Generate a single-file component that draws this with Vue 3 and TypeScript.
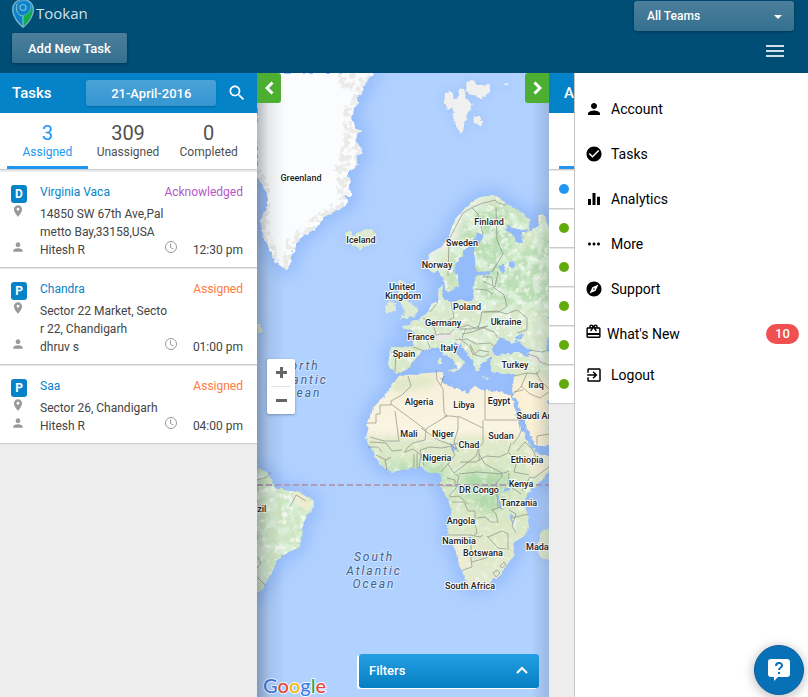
<script setup lang="ts">
import { ref } from 'vue'

interface Task {
  kind: string
  customer: string
  status: string
  tone: string
  address: string
  agent: string
  time: string
}
interface MenuItem {
  label: string
  icon: string
  kind?: string
  count?: number
}
interface Place {
  x: number
  y: number
  name: string
}

const team = ref('All Teams')
const activeTab = ref('Assigned')

const tabs = [
  { label: 'Assigned', count: 3 },
  { label: 'Unassigned', count: 309 },
  { label: 'Completed', count: 0 },
]

const tasks: Task[] = [
  { kind: 'D', customer: 'Virginia Vaca', status: 'Acknowledged', tone: 'violet', address: '14850 SW 67th Ave,Palmetto Bay,33158,USA', agent: 'Hitesh R', time: '12:30 pm' },
  { kind: 'P', customer: 'Chandra', status: 'Assigned', tone: 'orange', address: 'Sector 22 Market, Sector 22, Chandigarh', agent: 'dhruv s', time: '01:00 pm' },
  { kind: 'P', customer: 'Saa', status: 'Assigned', tone: 'orange', address: 'Sector 26, Chandigarh', agent: 'Hitesh R', time: '04:00 pm' },
]

const agents = ['busy', 'free', 'free', 'free', 'free', 'free']

const person = 'M12 12c2.21 0 4-1.79 4-4s-1.79-4-4-4-4 1.79-4 4 1.79 4 4 4zm0 2c-2.67 0-8 1.34-8 4v2h16v-2c0-2.66-5.33-4-8-4z'
const pin = 'M12 2C8.13 2 5 5.13 5 9c0 5.25 7 13 7 13s7-7.75 7-13c0-3.87-3.13-7-7-7zm0 9.5c-1.38 0-2.5-1.12-2.5-2.5s1.12-2.5 2.5-2.5 2.5 1.12 2.5 2.5-1.12 2.5-2.5 2.5z'

const menu: MenuItem[] = [
  { label: 'Account', icon: person },
  { label: 'Tasks', icon: 'M12 2C6.48 2 2 6.48 2 12s4.48 10 10 10 10-4.48 10-10S17.52 2 12 2zm-2 15l-5-5 1.41-1.41L10 14.17l7.59-7.59L19 8l-9 9z' },
  { label: 'Analytics', icon: 'M10 20h4V4h-4v16zm-6 0h4v-8H4v8zM16 9v11h4V9h-4z' },
  { label: 'More', icon: 'M6 10c-1.1 0-2 .9-2 2s.9 2 2 2 2-.9 2-2-.9-2-2-2zm12 0c-1.1 0-2 .9-2 2s.9 2 2 2 2-.9 2-2-.9-2-2-2zm-6 0c-1.1 0-2 .9-2 2s.9 2 2 2 2-.9 2-2-.9-2-2-2z' },
  { label: 'Support', icon: 'M12 10.9c-.61 0-1.1.49-1.1 1.1s.49 1.1 1.1 1.1c.61 0 1.1-.49 1.1-1.1s-.49-1.1-1.1-1.1zM12 2C6.48 2 2 6.48 2 12s4.48 10 10 10 10-4.48 10-10S17.52 2 12 2zm2.19 12.19L6 18l3.81-8.19L18 6l-3.81 8.19z' },
  { label: "What's New", kind: 'news', count: 10, icon: 'M20 6h-2.18c.11-.31.18-.65.18-1 0-1.66-1.34-3-3-3-1.05 0-1.96.54-2.5 1.35l-.5.67-.5-.68C10.96 2.54 10.05 2 9 2 7.34 2 6 3.34 6 5c0 .35.07.69.18 1H4c-1.11 0-1.99.89-1.99 2L2 19c0 1.11.89 2 2 2h16c1.11 0 2-.89 2-2V8c0-1.11-.89-2-2-2zm-5-2c.55 0 1 .45 1 1s-.45 1-1 1-1-.45-1-1 .45-1 1-1zM9 4c.55 0 1 .45 1 1s-.45 1-1 1-1-.45-1-1 .45-1 1-1zm11 15H4v-2h16v2zm0-5H4V8h5.08L7 10.83 8.62 12 11 8.76l1-1.36 1 1.36L15.38 12 17 10.83 14.92 8H20v6z' },
  { label: 'Logout', kind: 'last', icon: 'M10.09 15.59L11.5 17l5-5-5-5-1.41 1.41L12.67 11H3v2h9.67l-2.58 2.59zM19 3H5c-1.11 0-2 .9-2 2v4h2V5h14v14H5v-4H3v4c0 1.1.89 2 2 2h14c1.1 0 2-.9 2-2V5c0-1.1-.9-2-2-2z' },
]

const places: Place[] = [
  { x: 301, y: 181, name: 'Greenland' },
  { x: 361, y: 243, name: 'Iceland' },
  { x: 489, y: 225, name: 'Finland' },
  { x: 462, y: 246, name: 'Sweden' },
  { x: 437, y: 268, name: 'Norway' },
  { x: 402, y: 290, name: 'United' },
  { x: 403, y: 299, name: 'Kingdom' },
  { x: 467, y: 310, name: 'Poland' },
  { x: 443, y: 326, name: 'Germany' },
  { x: 506, y: 325, name: 'Ukraine' },
  { x: 421, y: 340, name: 'France' },
  { x: 449, y: 351, name: 'Italy' },
  { x: 404, y: 357, name: 'Spain' },
  { x: 515, y: 368, name: 'Turkey' },
  { x: 536, y: 388, name: 'Iraq' },
  { x: 419, y: 405, name: 'Algeria' },
  { x: 464, y: 408, name: 'Libya' },
  { x: 499, y: 404, name: 'Egypt' },
  { x: 542, y: 419, name: 'Saudi Arabia' },
  { x: 409, y: 437, name: 'Mali' },
  { x: 443, y: 437, name: 'Niger' },
  { x: 501, y: 439, name: 'Sudan' },
  { x: 469, y: 448, name: 'Chad' },
  { x: 437, y: 461, name: 'Nigeria' },
  { x: 527, y: 463, name: 'Ethiopia' },
  { x: 521, y: 487, name: 'Kenya' },
  { x: 479, y: 493, name: 'DR Congo' },
  { x: 519, y: 506, name: 'Tanzania' },
  { x: 461, y: 524, name: 'Angola' },
  { x: 459, y: 544, name: 'Namibia' },
  { x: 483, y: 556, name: 'Botswana' },
  { x: 551, y: 550, name: 'Madagascar' },
  { x: 470, y: 589, name: 'South Africa' },
  { x: 255, y: 512, name: 'Brazil' },
]
</script>

<template>
  <div class="app">
    <header class="topbar">
      <div class="topbar-left">
        <a class="brand" href="#">
          <svg width="22" height="28" viewBox="0 0 22 28" aria-hidden="true">
            <path d="M11-1C4-1 0 4 0 9.500c0 8 7 15.500 11 18.500 4-3 11-10.500 11-18.500C22 4 18-1 11-1z" fill="#7fb4c6" />
            <path d="M11 0C5 0 1.500 4.500 1.500 9.500 1.500 16 6 22 11 26.500 16 22 20.500 16 20.500 9.500 20.500 4.500 17 0 11 0z" fill="#0a83cc" />
            <path d="M19.500 5c3 8-2 16-8.500 21.500V15c5-.5 8-4 8.500-10z" fill="#11ad48" />
            <path d="M5 4c4-5 13-4 14 1 0 6-3 9.500-8 10.500" fill="none" stroke="#5aa9cf" />
            <circle cx="11" cy="7.500" r="3" fill="#0a83cc" stroke="#7fbcd3" stroke-width="1.200" />
            <path d="M5 4c-2 7 1 11.500 6 12V27" fill="none" stroke="#8fc5cf" />
          </svg>
          <span>Tookan</span>
        </a>
        <button class="add-task" type="button">Add New Task</button>
      </div>
      <div class="topbar-right">
        <div class="team">
          <select v-model="team" aria-label="Team">
            <option>All Teams</option>
          </select>
          <svg class="caret" width="8" height="4" viewBox="0 0 8 4" aria-hidden="true"><path d="M0 0h8L4 4z" fill="#fff" /></svg>
        </div>
        <button class="burger" type="button" aria-label="Menu">
          <svg width="18" height="12" viewBox="0 0 18 12"><path d="M0 0h18v2H0zM0 5h18v2H0zM0 10h18v2H0z" fill="#cfdfe8" /></svg>
        </button>
      </div>
    </header>

    <main class="body">
      <section class="tasks">
        <div class="bar">
          <h1>Tasks</h1>
          <button class="date" type="button">21-April-2016</button>
          <button class="search" type="button" aria-label="Search">
            <svg width="20" height="20" viewBox="0 0 24 24"><path fill="#fff" d="M15.500 14h-.79l-.28-.27C15.410 12.590 16 11.110 16 9.500 16 5.910 13.090 3 9.500 3S3 5.910 3 9.500 5.910 16 9.500 16c1.610 0 3.090-.59 4.230-1.570l.27.28v.79l5 4.990L20.490 19l-4.990-5zm-6 0C7.010 14 5 11.990 5 9.500S7.010 5 9.500 5 14 7.010 14 9.500 11.990 14 9.500 14z" /></svg>
          </button>
        </div>
        <nav class="tabs">
          <button
            v-for="tab in tabs"
            :key="tab.label"
            type="button"
            :class="['tab', { active: tab.label === activeTab }]"
            @click="activeTab = tab.label"
          >
            <b>{{ tab.count }}</b>
            <span>{{ tab.label }}</span>
          </button>
        </nav>
        <ul class="cards">
          <li v-for="task in tasks" :key="task.customer" class="card">
            <span class="badge">{{ task.kind }}</span>
            <div class="line head">
              <a href="#">{{ task.customer }}</a>
              <span :class="task.tone">{{ task.status }}</span>
            </div>
            <svg class="mark" width="14" height="14" viewBox="0 0 24 24" aria-hidden="true"><path :d="pin" /></svg>
            <p class="address">{{ task.address }}</p>
            <svg class="mark" width="14" height="14" viewBox="0 0 24 24" aria-hidden="true"><path :d="person" /></svg>
            <div class="line">
              <span class="agent">{{ task.agent }}</span>
              <svg class="clock" width="14" height="14" viewBox="0 0 14 14" aria-hidden="true">
                <circle cx="7" cy="7" r="5.500" />
                <path d="M6.500 3.500v4L9.500 9" />
              </svg>
              <span class="time">{{ task.time }}</span>
            </div>
          </li>
        </ul>
      </section>

      <section class="map" aria-label="Map">
        <svg class="world" viewBox="257 73 292 624" preserveAspectRatio="xMidYMid slice">
          <defs>
            <filter id="glow" x="-30%" y="-30%" width="160%" height="160%"><feGaussianBlur stdDeviation="9" /></filter>
            <filter id="soft" x="-50%" y="-50%" width="200%" height="200%"><feGaussianBlur stdDeviation="5" /></filter>
            <filter id="rough" x="-5%" y="-5%" width="110%" height="110%">
              <feTurbulence type="fractalNoise" baseFrequency=".22" numOctaves="2" seed="4" />
              <feDisplacementMap in="SourceGraphic" scale="5" xChannelSelector="R" yChannelSelector="G" />
            </filter>
            <filter id="woods" x="0" y="0" width="100%" height="100%">
              <feTurbulence type="fractalNoise" baseFrequency=".09" numOctaves="4" seed="8" />
              <feColorMatrix values="0 0 0 0 .71  0 0 0 0 .87  0 0 0 0 .69  5 0 0 0 -2.200" />
            </filter>
            <filter id="fields" x="0" y="0" width="100%" height="100%">
              <feTurbulence type="fractalNoise" baseFrequency=".16" numOctaves="3" seed="21" />
              <feColorMatrix values="0 0 0 0 .96  0 0 0 0 .96  0 0 0 0 .91  0 7 0 0 -4" />
            </filter>
            <filter id="rocks" x="0" y="0" width="100%" height="100%">
              <feTurbulence type="fractalNoise" baseFrequency=".18" numOctaves="3" seed="3" />
              <feColorMatrix values="0 0 0 0 .82  0 0 0 0 .83  0 0 0 0 .80  0 7 0 0 -3" />
            </filter>
            <linearGradient id="africaFill" gradientUnits="userSpaceOnUse" x1="0" y1="370" x2="0" y2="590">
              <stop offset="0" stop-color="#f6efd8" />
              <stop offset=".27" stop-color="#faf4e2" />
              <stop offset=".33" stop-color="#e0e8c8" />
              <stop offset=".5" stop-color="#d3e6c0" />
              <stop offset=".8" stop-color="#dfe8c8" />
              <stop offset="1" stop-color="#e5e8ce" />
            </linearGradient>
            <path id="greenland" d="M257 73H374L369 78 366 84 362 88 363 92 357 97 359 103 354 108 353 115 350 120 354 122 355 128 361 131 357 134 356 141 360 147 363 153 356 156 358 164 355 168 347 173 351 181 348 184 350 190 352 197 344 195 348 201 345 206 338 210 330 214 324 217 320 223 316 228 310 232 303 236 297 243 295 249 291 257 290 265 287 270 282 267 277 263 272 257 270 250 267 243 263 237 261 222 263 213 266 212 268 200 266 192 262 185 257 176z" />
            <path id="europe" d="M429 270 428 260 430 253 440 248 448 240 452 227 457 217 467 207 478 198 492 195 500 198 505 203 523 213 530 222 528 230 517 229 507 225 505 230 513 235 515 243 523 243 522 233 532 230 540 225 538 215 545 215 547 223 549 228V472L538 455 530 443 520 425 515 405 512 390 514 378 515 373 503 374 492 372 490 363 493 357 488 358 480 365 480 372 475 370 472 360 467 353 460 345 455 342 452 348 457 355 465 362 463 365 458 371 456 363 450 358 442 352 438 347 430 348 422 351 413 360 410 367 402 372 395 373 388 365 391 347 413 347 415 333 402 327 410 325 411 320 418 320 428 312 432 303 438 302 438 288 443 286 443 298 450 302 463 300 470 302 475 297 472 290 460 290 450 296 446 290 444 281 438 270 434 273z" />
            <path id="africa" d="M505 393 485 390 478 387 472 387 468 393 457 388 445 385 441 380 443 372 427 373 410 375 398 376 395 382 387 393 373 408 367 422 368 430 366 438 373 452 380 465 392 472 410 468 423 467 430 473 440 473 442 480 440 487 448 500 452 513 448 527 449 538 457 553 459 565 465 577 468 586 474 588 487 585 500 575 507 565 515 553 513 543 523 537 529 528 528 515 523 502 528 493 540 482 549 471V455L538 456 530 445 521 430 517 412 511 396z" />
            <path id="brazil" d="M257 468 267 472 272 480 275 488 288 491 298 492 313 500 314 507 303 523 300 547 287 553 277 560 270 577 262 590 257 592z" />
            <path id="islands" d="M399 281 404 281 402 286 406 289 405 297 410 303 418 309 415 317 400 319 405 312 402 305 397 298zM387 303 395 301 396 310 387 314 385 311zM540 533 549 528V560L540 557 538 550zM346 233 350 231 354 236 358 232 367 229 373 231 376 238 370 245 360 249 353 246 351 242 346 239zM439 358 442 358 442 364 439 364zM448 370 458 368 456 373 450 371zM482 377 490 378 488 379 482 378zM257 324 260 323 263 332 259 334 257 332z" />
            <path id="svalbard" d="M445 93 451 90 455 100 459 97 459 88 464 89 466 98 473 104 468 112 465 122 462 136 456 126 453 118 454 109 448 110 444 102zM465 85 471 79 480 85 490 84 490 92 482 99 472 95 466 91zM474 115 479 117 483 122 480 126 473 123zM503 84 508 83 508 86z" />
            <clipPath id="inGreenland"><use href="#greenland" /></clipPath>
            <clipPath id="inEurope"><use href="#europe" /></clipPath>
            <clipPath id="inAfrica"><use href="#africa" /></clipPath>
            <clipPath id="inBrazil"><use href="#brazil" /></clipPath>
            <mask id="coast" maskUnits="userSpaceOnUse" x="250" y="60" width="140" height="230">
              <path d="M338 73l34 2-12 18-6 18-4 26-6 24-2 28M350 198l-14 10-20 14-24 20-4 24-14-8-10-24v-46l-8-16" fill="none" stroke="#fff" stroke-width="12" />
              <path d="M352 105l2 50-14 20M360 85l-20-8M349 175l-2 20" fill="none" stroke="#fff" stroke-width="20" />
            </mask>
          </defs>

          <rect x="-1000" y="-500" width="2600" height="1800" fill="#b1d1ff" />
          <g filter="url(#glow)" fill="#8bb4fa" stroke="#8bb4fa" stroke-width="12" opacity=".8">
            <use href="#greenland" /><use href="#europe" /><use href="#africa" /><use href="#brazil" />
          </g>
          <g filter="url(#soft)" fill="#98bdfa" stroke="#98bdfa" stroke-width="4" opacity=".5">
            <use href="#svalbard" /><use href="#islands" />
          </g>

          <g filter="url(#rough)">
            <use href="#greenland" fill="#fbfcfe" />
            <use href="#svalbard" fill="#eff0ef" />
            <use href="#europe" fill="#dae8ca" />
            <use href="#africa" fill="url(#africaFill)" />
            <use href="#brazil" fill="#cfe6c3" />
            <use href="#islands" fill="#deebd0" />
          </g>

          <g clip-path="url(#inGreenland)">
            <g mask="url(#coast)">
              <rect x="250" y="60" width="140" height="230" filter="url(#rocks)" />
            </g>
          </g>
          <g clip-path="url(#inEurope)">
            <g filter="url(#soft)">
              <path d="M463 215l35-12 28 15-10 30-30 20-25 10-15 15zM480 270l70-35v75l-70-10z" fill="#b4dcb0" opacity=".8" />
              <path d="M505 378h44v85l-20-10z" fill="#fbf1d6" />
              <path d="M430 268l2-16 18-12 8-24 24-17" fill="none" stroke="#f4f3ee" stroke-width="10" />
            </g>
            <rect x="380" y="195" width="170" height="175" filter="url(#woods)" />
            <rect x="380" y="195" width="170" height="175" filter="url(#fields)" opacity=".7" />
            <path d="M428 340l14-7 16 1-16 7zM530 352l16 8-5 6-13-8z" fill="#e8e7e1" />
          </g>
          <g clip-path="url(#inAfrica)">
            <g filter="url(#soft)">
              <path d="M457 480l14-9 36 2-4 28-12 14-20-10z" fill="#a6d4a2" opacity=".8" />
              <path d="M383 460l30 4 30-6 6 30-10-8-45 0z" fill="#b4dcae" opacity=".8" />
              <path d="M449 535l12 5 8 25 2 15-12-18zM530 455l20 2v20l-20-2z" fill="#fbf0d8" />
              <path d="M385 380l50-4v8l-38 8z" fill="#d9e7c4" />
            </g>
            <rect x="365" y="440" width="185" height="150" filter="url(#woods)" opacity=".35" />
            <rect x="365" y="440" width="185" height="150" filter="url(#fields)" opacity=".4" />
          </g>
          <g clip-path="url(#inBrazil)">
            <rect x="257" y="465" width="60" height="130" filter="url(#woods)" />
            <rect x="257" y="465" width="60" height="130" filter="url(#fields)" opacity=".8" />
            <path d="M292 490l12 3 8 10-5 8-10-6z" fill="#f1ecd1" opacity=".8" />
          </g>

          <g fill="#94bcfb" filter="url(#rough)">
            <path d="M478 233l5 1-3 9-5 6-1 14 3 9 14-1-1 3-14 2-2 10-2 10-20 2-8 4-2-8 8-3 9-5-1-9-4-6 2-9 7-8 3-6z" />
            <path d="M498 266l6-1 2 6-4 2zM508 262l5 0 2 5-4 1z" />
            <path d="M499 337l6 2 6 4 8-3 2 4 11 7-5 5-10-4-10 2-13 1-1-7zM515 337l9-4-2 5-6 2z" />
            <path d="M511 395l5 4 5 13 6 16 7 15 5 4 10-1v9h-10l-9-11-8-14-5-15z" />
            <path d="M504 487h5v4h-5zM498 494l4 14-2 1-3-12zM511 513l2 9-1 3-2-8zM450 444l3 1 3 4-2 2z" />
            <path d="M547 338h3v18l-4-8zM546 402l4-1v6z" />
          </g>

          <g class="borders">
            <path d="M448 276l1-36 6-12 8-15 10-6 10-4 5-1 7-2 3 3 8 2M472 208l6 6 5 20M496 207l1 33 6 14-11 18M482 277l10 0 1 9M475 289l12 1 6 4M483 281l12 6 3-15" />
            <path d="M493 287l11 8 3 11-8 6-17 0-2 10-2 6 10-2M430 312l8-10M451 303l3 14-6 4 10 8 13 0 8-3M423 318l9 5 4 10-6 4M430 348l-3-8 5-4 8-2 10 0 4-5M458 328l10-3 8 4 10-2M462 334l10-2 12-4 10 4 4 6M455 340l12-1 9 5 14-1 5 4M459 338l11 9 3 8 6-5 10 2M470 344l5 11 8 2 6-3M466 328l-4 10M484 312l13-1 9 3 11-4 10 8 0 12-10 3M391 352l5 1-1 19M413 347l11 4" />
            <path d="M514 376l13-3 10 1 3-4M528 354l9 3 3 5 9 3M530 350l12 2 7-2M527 373l-6 14-9 8M521 386l9 8 10 4 9-6M536 372l4 8 9 9M514 392l9-2M537 444l0-8 12-2" />
            <path d="M408 376l3 10-9 9-11 6v4l-11 0v9h-4v9h-9M391 404l35 26 1-2 20-12-3-4-1-23-6-9-1-10M441 385l3-9M444 416l7 0 7 1 0 12-4 13 4 10M458 416l25 12 0 15-4 4v14M485 390v30h38M483 428v-8M395 411l4 30-15 0-14-4M426 430l-1 10-12 3-5 4-4 6M421 428l17 12 14 5 6-2M370 442l16 1 6 8 10-1M368 447h10l4 5M376 455l10 5 5-3M385 460l2 10M405 452l8-3 8 6-2 13M414 468v-14M417 468v-15M424 466l-4-16 10-3 12 1 10-2 4 3M452 449l3 6-8 10-6 7M448 464l6 9 22-17 3-9M460 462l16 0 10-6 13 1 9-4 3-10M479 454l6 10 17 9M459 474l18-2 25 2 7-3M447 478l8 2 0 6-12 0M455 474l4 2-3 12-7 8M449 497l10-1 9 8M452 502l12 0 4 9h7v12l2 10-3 2M448 535h22l10 2 3-2M477 518l8-1 6 5h7l-2-8-4-4 8-3 3 3M498 507l-2-24 6-6 0-5M502 498l20 7M512 518l16-4M509 510l7 4-4 12 4 7M488 537l14-6 6 3v16M487 536l11 12 8 1M471 537v22l1 8-9 3M472 562l14-4 10-8M509 473l-1 12 13 9M522 491l8-14 4 1 15-11M517 451l8-9 8 8 4 10M509 453l8 8-3 11 15 3M513 444l6-8 3-8M500 566l4-4 2 3-4 3zM493 573l4-3 3 3-4 4z" />
            <path d="M257 480l10-3 4-5M257 568l4-5-3-6M257 577l8 8M290 507l6-12 10 6" />
          </g>
          <path d="M-400 485H1200" stroke="#b19bb6" stroke-width="2" stroke-dasharray="6 3" />

          <g class="places">
            <text v-for="place in places" :key="place.name" :x="place.x" :y="place.y">{{ place.name }}</text>
          </g>
          <g class="oceans">
            <text x="300" y="370">North</text>
            <text x="300" y="384">Atlantic</text>
            <text x="300" y="397">Ocean</text>
            <text x="374" y="561">South</text>
            <text x="374" y="575">Atlantic</text>
            <text x="374" y="588">Ocean</text>
          </g>
        </svg>

        <button class="toggle toggle-left" type="button" aria-label="Hide tasks">
          <svg width="9" height="14" viewBox="0 0 9 14"><path d="M7.500 1.500L2 7l5.500 5.500" /></svg>
        </button>
        <button class="toggle toggle-right" type="button" aria-label="Hide agents">
          <svg width="9" height="14" viewBox="0 0 9 14"><path d="M1.500 1.500L7 7l-5.500 5.500" /></svg>
        </button>

        <div class="zoom">
          <button type="button" aria-label="Zoom in"><svg width="11" height="11" viewBox="0 0 11 11"><path d="M4 0h3v4h4v3H7v4H4V7H0V4h4z" /></svg></button>
          <button type="button" aria-label="Zoom out"><svg width="11" height="11" viewBox="0 0 11 11"><path d="M0 4h11v3H0z" /></svg></button>
        </div>

        <a class="google" href="#"><span class="g-blue">G</span><span class="g-red">o</span><span class="g-yellow">o</span><span class="g-blue">g</span><span class="g-green">l</span><span class="g-red">e</span></a>

        <button class="filters" type="button">
          <span>Filters</span>
          <svg width="12" height="8" viewBox="0 0 12 8" aria-hidden="true"><path d="M1 7l5-5 5 5" /></svg>
        </button>
      </section>

      <section class="agents">
        <div class="bar"><h2>Agents</h2></div>
        <div class="agent-tab"></div>
        <ul>
          <li v-for="(state, index) in agents" :key="index"><i :class="state"></i></li>
        </ul>
      </section>

      <nav class="menu">
        <a v-for="item in menu" :key="item.label" href="#" :class="['item', item.kind]">
          <svg viewBox="0 0 24 24" aria-hidden="true"><path :d="item.icon" /></svg>
          <span>{{ item.label }}</span>
          <em v-if="item.count">{{ item.count }}</em>
        </a>
      </nav>
    </main>

    <button class="chat" type="button" aria-label="Help">
      <svg width="24" height="24" viewBox="0 0 24 24">
        <path d="M4 1h16a3 3 0 0 1 3 3v12a3 3 0 0 1-3 3h-9l-4 4v-4H4a3 3 0 0 1-3-3V4a3 3 0 0 1 3-3z" fill="#fff" />
        <path d="M9 8c0-4 6-4 6-.5 0 2.500-3 2-3 4.500M12 14v2" fill="none" stroke="#0771b8" stroke-width="2" />
      </svg>
    </button>
  </div>
</template>

<style>
body {
  margin: 0;
}
</style>

<style scoped>
.app {
  display: flex;
  flex-direction: column;
  min-height: 100vh;
  background: #fff;
  color: #444;
  font-family: Roboto, 'Liberation Sans', sans-serif;
  font-size: 12px;
}
.app * {
  box-sizing: border-box;
}
button {
  padding: 0;
  border: 0;
  background: none;
  color: inherit;
  font: inherit;
  cursor: pointer;
}
a {
  color: inherit;
  text-decoration: none;
}
ul {
  margin: 0;
  padding: 0;
  list-style: none;
}
svg {
  display: block;
  flex: none;
}

.topbar {
  display: flex;
  justify-content: space-between;
  padding: 0 14px 10px 12px;
  background: #004e76;
  color: #fff;
}
.topbar-left {
  display: flex;
  flex-direction: column;
  align-items: flex-start;
  gap: 5px;
}
.brand {
  display: flex;
  align-items: center;
  gap: 2px;
  height: 28px;
  color: #cfe1eb;
  font-family: 'Open Sans', sans-serif;
  font-size: 15px;
  line-height: 26px;
}
.brand span {
  padding-bottom: 2px;
}
.add-task {
  height: 30px;
  padding: 0 16px;
  border-radius: 2px;
  background: linear-gradient(#4c7f9c, #34708f);
  box-shadow: 0 1px 3px rgba(0, 0, 0, 0.3);
  font-size: 13px;
  font-weight: 500;
}
.topbar-right {
  display: flex;
  flex-direction: column;
  align-items: flex-end;
  gap: 8px;
  padding-top: 1px;
}
.team {
  position: relative;
}
.team select {
  display: block;
  width: 160px;
  height: 30px;
  padding: 0 24px 0 13px;
  border: 0;
  border-radius: 3px;
  appearance: none;
  background: linear-gradient(#4c7f9c, #34708f);
  box-shadow: 0 1px 3px rgba(0, 0, 0, 0.3);
  color: #fff;
  font: 500 12px Roboto, sans-serif;
}
.caret {
  position: absolute;
  top: 14px;
  right: 12px;
  pointer-events: none;
}
.burger {
  display: flex;
  align-items: center;
  justify-content: center;
  width: 28px;
  height: 24px;
  margin-right: 5px;
}

.body {
  display: flex;
  flex: 1;
}
.bar {
  display: flex;
  align-items: center;
  height: 40px;
  background: #0583c8;
  color: #fff;
}
.bar h1,
.bar h2 {
  margin: 0;
  font-size: 15px;
  font-weight: 500;
}
.tasks {
  flex: none;
  width: 257px;
  background: #ededed;
}
.tasks .bar {
  justify-content: space-between;
  padding: 0 10px 0 12px;
}
.date {
  width: 130px;
  height: 26px;
  margin-left: 24px;
  border-radius: 3px;
  background: linear-gradient(#4ba3d7, #3496d1);
  box-shadow: 0 1px 2px rgba(0, 0, 0, 0.2);
  font-size: 13px;
  font-weight: 500;
}
.tabs {
  display: flex;
  height: 56px;
  padding: 0 8px 0 7px;
  background: #fff;
  box-shadow: 0 1px 1px #ccc;
}
.tab {
  display: flex;
  flex: 1;
  flex-direction: column;
  align-items: center;
  padding-top: 9px;
  border-bottom: 3px solid transparent;
  color: #505050;
}
.tab b {
  font-size: 20px;
  font-weight: 400;
  line-height: 22px;
}
.tab span {
  line-height: 16px;
}
.tab.active {
  border-color: #2196f3;
  color: #2196f3;
}
.cards {
  display: flex;
  flex-direction: column;
  gap: 2px;
  padding-top: 3px;
}
.card {
  display: grid;
  grid-template-columns: 29px 1fr;
  padding: 11px 14px 8px 11px;
  background: #fff;
  box-shadow: 0 1px 1px #ccc;
  line-height: 18px;
}
.badge {
  width: 16px;
  height: 18px;
  margin-top: 2px;
  border-radius: 3px;
  background: #0583c8;
  color: #fff;
  font-weight: 700;
  text-align: center;
}
.line {
  display: flex;
}
.head {
  justify-content: space-between;
  padding-bottom: 4px;
}
.head a {
  color: #0583c8;
}
.violet {
  color: #b559c6;
}
.orange {
  color: #ff7a3d;
}
.mark,
.clock {
  margin-top: -1px;
}
.mark {
  fill: #999;
}
.address {
  width: 130px;
  margin: 0;
  word-break: break-all;
}
.agent {
  flex: 1;
}
.clock {
  fill: none;
  stroke: #999;
}
.time {
  width: 65px;
  text-align: right;
}

.map {
  position: relative;
  flex: 1;
  min-width: 0;
  overflow: hidden;
  background: #b1d1ff;
}
.map::after {
  content: '';
  position: absolute;
  inset: 0;
  background:
    linear-gradient(90deg, rgba(40, 50, 60, 0.34), rgba(40, 50, 60, 0.1) 12px, transparent 28px),
    linear-gradient(270deg, rgba(40, 50, 60, 0.16), transparent 18px);
  pointer-events: none;
}
.world {
  position: absolute;
  inset: 0;
  width: 100%;
  height: 100%;
}
.borders {
  fill: none;
  stroke: #777b72;
  stroke-width: 0.7;
  opacity: 0.8;
}
.places {
  fill: #222;
  stroke: rgba(255, 255, 255, 0.85);
  stroke-width: 2px;
  paint-order: stroke;
  font-size: 9px;
  font-weight: 500;
  text-anchor: middle;
}
.oceans {
  fill: #43628c;
  stroke: rgba(215, 231, 255, 0.8);
  stroke-width: 2px;
  paint-order: stroke;
  font-size: 12px;
  font-style: italic;
  letter-spacing: 2px;
  text-anchor: middle;
}
.toggle {
  position: absolute;
  top: 0;
  z-index: 1;
  display: flex;
  align-items: center;
  justify-content: center;
  width: 24px;
  height: 30px;
  background: #4caf32;
}
.toggle path {
  fill: none;
  stroke: #fff;
  stroke-width: 3;
}
.toggle-left {
  left: 0;
  border-radius: 0 3px 3px 0;
}
.toggle-right {
  right: 0;
  border-radius: 3px 0 0 3px;
}
.zoom {
  position: absolute;
  bottom: 283px;
  left: 10px;
  z-index: 1;
  width: 28px;
  border-radius: 2px;
  background: #fff;
  box-shadow: 0 1px 3px rgba(0, 0, 0, 0.3);
}
.zoom button {
  display: flex;
  align-items: center;
  justify-content: center;
  width: 20px;
  height: 27px;
  margin: 0 4px;
}
.zoom button + button {
  height: 28px;
  border-top: 1px solid #e0e0e0;
}
.zoom path {
  fill: #666;
}
.google {
  position: absolute;
  bottom: 0;
  left: 6px;
  font-family: Lato, sans-serif;
  font-size: 20px;
  font-weight: 500;
  line-height: 24px;
  -webkit-text-stroke: 2px rgba(255, 255, 255, 0.9);
  paint-order: stroke fill;
}
.g-blue {
  color: #3f7de8;
}
.g-red {
  color: #e2493b;
}
.g-yellow {
  color: #f4b70d;
}
.g-green {
  color: #34a457;
}
.filters {
  position: absolute;
  right: 10px;
  bottom: 9px;
  z-index: 1;
  display: flex;
  align-items: center;
  justify-content: space-between;
  width: 180px;
  height: 34px;
  padding: 0 11px 2px 10px;
  border-radius: 3px;
  background: linear-gradient(#259fe3, #057fc2);
  box-shadow: -2px 1px 0 #fff;
  color: #fff;
  font-size: 13px;
  font-weight: 500;
}
.filters path {
  fill: none;
  stroke: #fff;
  stroke-width: 2;
}

.agents {
  flex: none;
  width: 25px;
  overflow: hidden;
  background: #ededed;
}
.agents .bar {
  padding-left: 15px;
}
.agent-tab {
  height: 56px;
  background: linear-gradient(#2196f3, #2196f3) 10px 100% / 100% 3px no-repeat #fff;
  box-shadow: 0 1px 1px #ccc;
}
.agents ul {
  display: flex;
  flex-direction: column;
  gap: 2px;
  padding-top: 2px;
}
.agents li {
  display: flex;
  align-items: center;
  height: 37px;
  padding: 0 0 2px 10px;
  background: #fff;
  box-shadow: 0 1px 1px #ccc;
}
.agents i {
  flex: none;
  width: 10px;
  height: 10px;
  border-radius: 50%;
}
.busy {
  background: #2196f3;
}
.free {
  background: #63ab0c;
}

.menu {
  flex: none;
  width: 234px;
  padding-top: 13px;
  border-left: 1px solid #c4c4c4;
  background: #fff;
  color: #000;
}
.item {
  display: flex;
  align-items: center;
  gap: 8px;
  height: 45px;
  padding: 0 9px 0 10px;
  font-size: 14px;
}
.item svg {
  width: 18px;
  height: 18px;
}
.item.news {
  gap: 5px;
}
.item.news svg {
  width: 17px;
  height: 17px;
  margin-bottom: 4px;
}
.item.last {
  height: 37px;
}
.item em {
  min-width: 33px;
  margin-left: auto;
  border-radius: 10px;
  background: #f05050;
  color: #fff;
  font-size: 13px;
  font-style: normal;
  font-weight: 500;
  line-height: 20px;
  text-align: center;
}
.chat {
  position: fixed;
  right: 4px;
  bottom: 2px;
  z-index: 2;
  display: flex;
  align-items: center;
  justify-content: center;
  width: 50px;
  height: 50px;
  border: 1px solid #0a5c9c;
  border-radius: 50%;
  background: #0771b8;
  box-shadow: 0 2px 12px rgba(0, 0, 0, 0.3);
}
</style>
